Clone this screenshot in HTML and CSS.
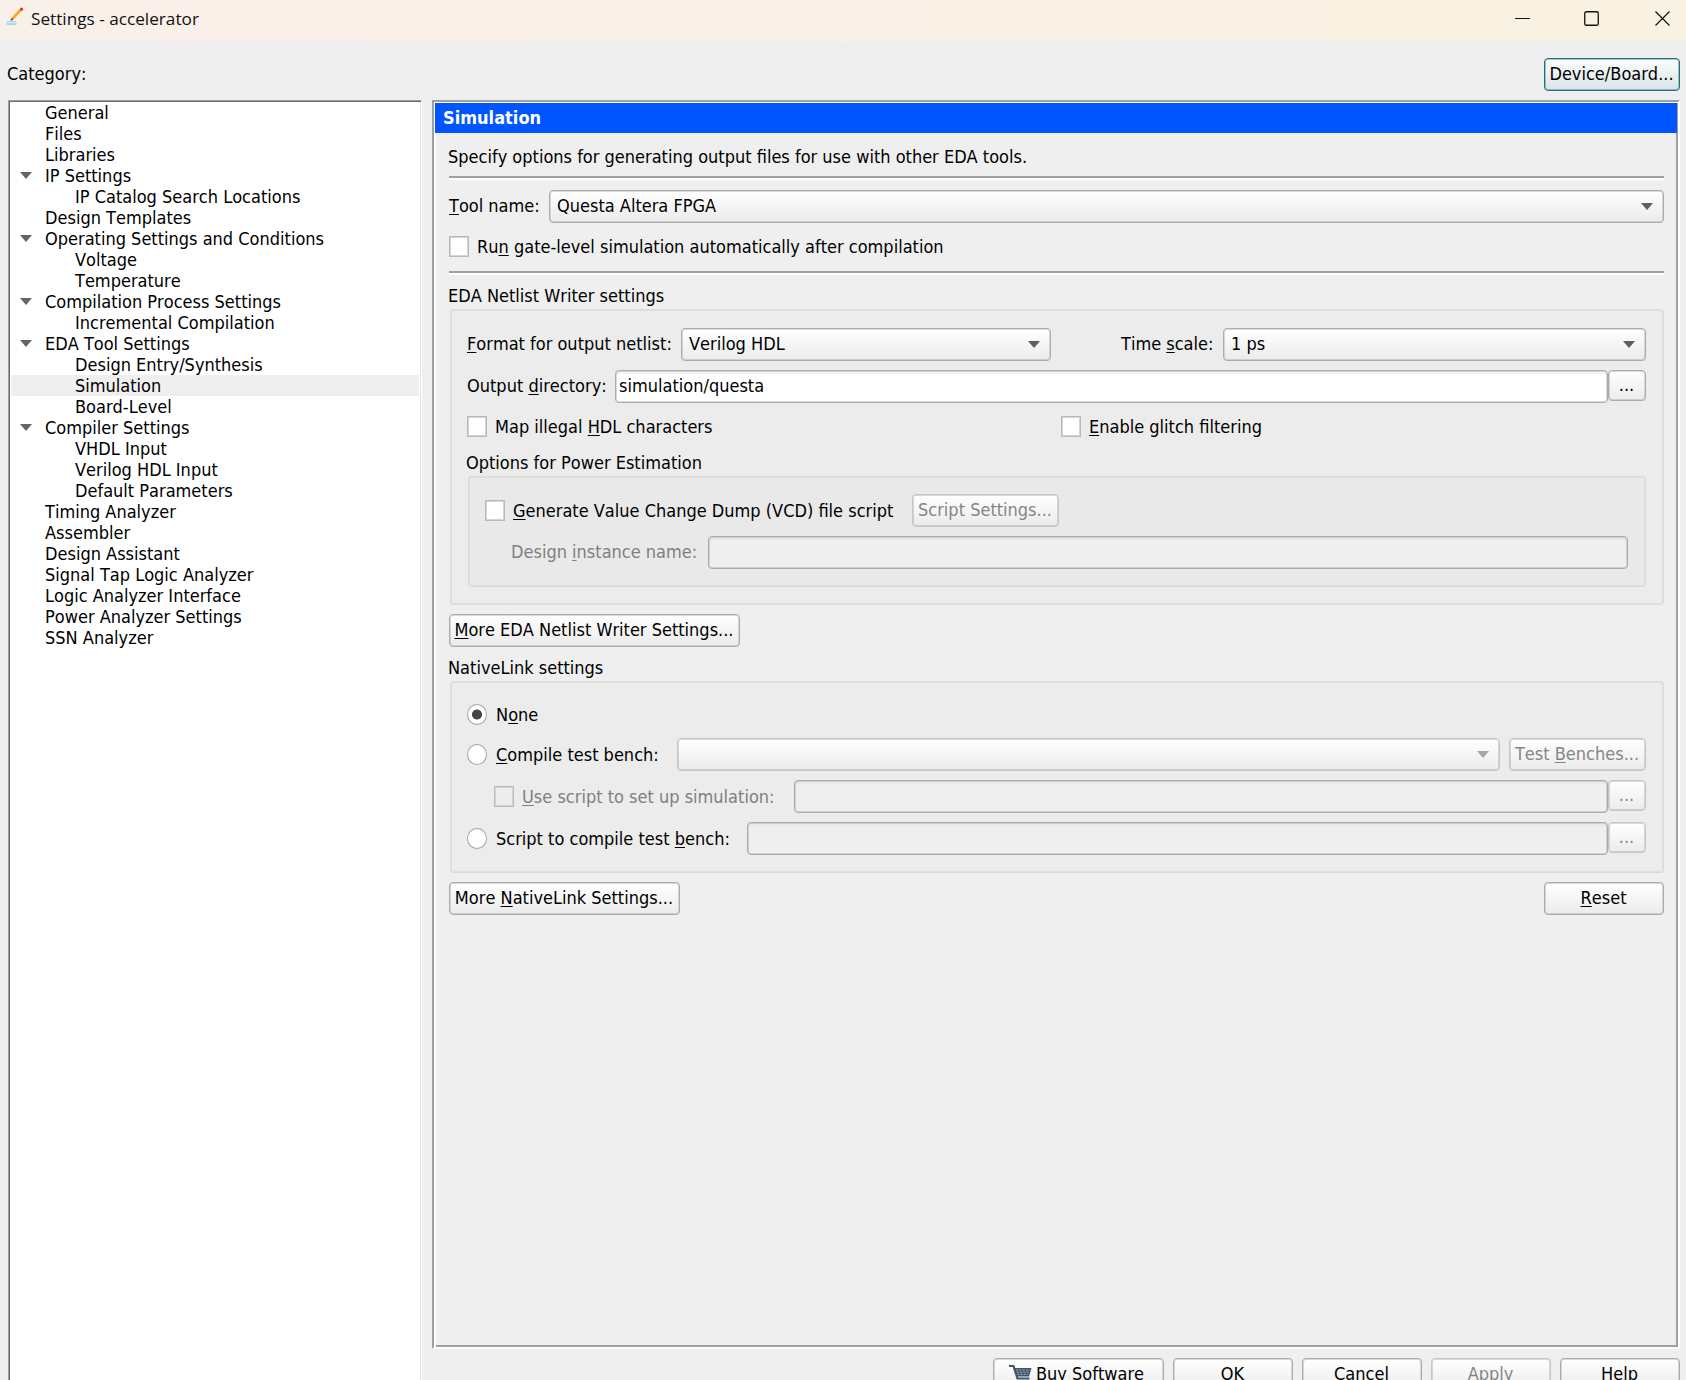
FILE: index.html
```html
<!DOCTYPE html>
<html lang="en">
<head>
<meta charset="utf-8">
<title>Settings - accelerator</title>
<link rel="stylesheet" href="styles.css">
</head>
<body>
<header class="titlebar">
  <svg class="app-icon" width="18" height="20" viewBox="0 0 18 20"><rect x="0.5" y="14" width="10" height="4" fill="#a3d9ea"/><path d="M0.5 15.6h10" stroke="#d8eff5"/><path d="M6.2 12L14.6 3" stroke="#f7a823" stroke-width="2.6"/><path d="M4.8 13.4L6.8 11.4" stroke="#6b5a48" stroke-width="1.8"/><circle cx="15.5" cy="2.2" r="1.6" fill="#e0322c"/></svg>
  <span class="title">Settings - accelerator</span>
  <div class="window-buttons">
    <svg width="16" height="16" viewBox="0 0 16 16"><path d="M0 7.5h15" stroke="#111"/></svg>
    <svg width="16" height="16" viewBox="0 0 16 16"><rect x=".75" y=".75" width="13.5" height="13.5" rx="1.5" fill="none" stroke="#111" stroke-width="1.3"/></svg>
    <svg class="close" width="16" height="16" viewBox="0 0 16 16"><path d="M.5 .5l14 14M14.5 .5l-14 14" stroke="#111" stroke-width="1.2"/></svg>
  </div>
</header>
<div class="top-row">
  <span>Category:</span>
  <button class="btn focus device">Device/Board...</button>
</div>
<main class="body">
  <nav class="tree">
    <div class="item">General</div>
    <div class="item">Files</div>
    <div class="item">Libraries</div>
    <div class="item open">IP Settings</div>
    <div class="item child">IP Catalog Search Locations</div>
    <div class="item">Design Templates</div>
    <div class="item open">Operating Settings and Conditions</div>
    <div class="item child">Voltage</div>
    <div class="item child">Temperature</div>
    <div class="item open">Compilation Process Settings</div>
    <div class="item child">Incremental Compilation</div>
    <div class="item open">EDA Tool Settings</div>
    <div class="item child">Design Entry/Synthesis</div>
    <div class="item child selected">Simulation</div>
    <div class="item child">Board-Level</div>
    <div class="item open">Compiler Settings</div>
    <div class="item child">VHDL Input</div>
    <div class="item child">Verilog HDL Input</div>
    <div class="item child">Default Parameters</div>
    <div class="item">Timing Analyzer</div>
    <div class="item">Assembler</div>
    <div class="item">Design Assistant</div>
    <div class="item">Signal Tap Logic Analyzer</div>
    <div class="item">Logic Analyzer Interface</div>
    <div class="item">Power Analyzer Settings</div>
    <div class="item">SSN Analyzer</div>
  </nav>
  <div class="right">
    <section class="panel">
      <h1 class="panel-title">Simulation</h1>
      <div class="content">
        <p class="line intro">Specify options for generating output files for use with other EDA tools.</p>
        <hr class="sep">
        <div class="row tool-row"><label class="tool-label"><u>T</u>ool name:</label><div class="combo grow">Questa Altera FPGA</div></div>
        <div class="row check-row run-row"><i class="check"></i><span class="check-label">Ru<u>n</u> gate-level simulation automatically after compilation</span></div>
        <hr class="sep">
        <h2 class="line netlist-heading">EDA Netlist Writer settings</h2>
        <div class="group netlist-group">
          <div class="row"><label class="format-label"><u>F</u>ormat for output netlist:</label><div class="combo format-combo">Verilog HDL</div><label class="time-label">Time <u>s</u>cale:</label><div class="combo grow">1 ps</div></div>
          <div class="row next"><label class="output-label">Output <u>d</u>irectory:</label><div class="input grow">simulation/questa</div><button class="btn browse">...</button></div>
          <div class="row check-row map-row"><i class="check"></i><span class="check-label map-label">Map illegal <u>H</u>DL characters</span><i class="check"></i><span class="check-label"><u>E</u>nable glitch filtering</span></div>
          <h3 class="line power-heading">Options for Power Estimation</h3>
          <div class="group power-group">
            <div class="row"><i class="check"></i><span class="check-label vcd-label"><u>G</u>enerate Value Change Dump (VCD) file script</span><button class="btn disabled script-btn">Script Settings...</button></div>
            <div class="row next instance-row"><label class="instance-label muted">Design <u>i</u>nstance name:</label><div class="input off grow"></div></div>
          </div>
        </div>
        <button class="btn more-eda"><span><u>M</u>ore EDA Netlist Writer Settings...</span></button>
        <h2 class="line native-heading">NativeLink settings</h2>
        <div class="group native-group">
          <div class="row check-row"><i class="radio on"></i><span class="radio-label">N<u>o</u>ne</span></div>
          <div class="row compile-row"><i class="radio"></i><span class="radio-label compile-label"><u>C</u>ompile test bench:</span><div class="combo off grow"></div><button class="btn disabled bench-btn"><span>Test <u>B</u>enches...</span></button></div>
          <div class="row next use-row"><i class="check off"></i><span class="check-label use-label muted"><u>U</u>se script to set up simulation:</span><div class="input off grow"></div><button class="btn disabled browse">...</button></div>
          <div class="row next"><i class="radio"></i><span class="radio-label script-label">Script to compile test <u>b</u>ench:</span><div class="input off grow"></div><button class="btn disabled browse">...</button></div>
        </div>
        <div class="row last-row"><button class="btn more-native"><span>More <u>N</u>ativeLink Settings...</span></button><button class="btn std"><span><u>R</u>eset</span></button></div>
      </div>
    </section>
    <footer class="actions">
      <button class="btn buy"><svg width="23" height="20" viewBox="0 0 23 20"><path d="M0 2h4.5l4 12.5h12" fill="none" stroke="#40566b" stroke-width="2.2"/><path d="M4.5 4H22.5L20 12.5H8z" fill="#40566b"/><path d="M7 6H20.5M8 8.2H19.5M8.5 10.4H19" stroke="#a9b7c4" stroke-width=".9" stroke-dasharray="2 1.2"/><circle cx="10" cy="17.8" r="2" fill="#40566b"/><circle cx="18.5" cy="17.8" r="2" fill="#40566b"/></svg>Buy Software</button>
      <button class="btn std">OK</button>
      <button class="btn std">Cancel</button>
      <button class="btn std disabled">Apply</button>
      <button class="btn std">Help</button>
    </footer>
  </div>
</main>
</body>
</html>
```
FILE: styles.css
```css
* { box-sizing: border-box; }

body {
  margin: 0;
  width: 1686px;
  height: 1380px;
  overflow: hidden;
  display: flex;
  flex-direction: column;
  background: #efefef;
  color: #000;
  font: 18px/21px "DejaVu Sans Condensed", "DejaVu Sans", sans-serif;
  font-stretch: condensed;
  font-kerning: none;
  white-space: nowrap;
}

h1, h2, h3, p { margin: 0; font-size: inherit; font-weight: normal; }
u { text-decoration-thickness: 1px; text-underline-offset: 2px; text-decoration-skip-ink: none; }

.titlebar {
  flex: none;
  height: 41px;
  display: flex;
  align-items: center;
  padding: 0 15px 4px 6px;
  background: linear-gradient(90deg, #faf0ea, #faf1e8 50%, #f9f2e2 85%);
}
.app-icon { margin-right: 7px; margin-top: -3px; }
.title { font: 17.2px/22px "Open Sans", "Noto Sans", sans-serif; font-stretch: normal; color: #111; }
.window-buttons { margin-left: auto; display: flex; gap: 53px; }
.close { margin-left: 2px; }

.top-row {
  flex: none;
  height: 59px;
  padding: 17px 6px 9px 7px;
  display: flex;
  justify-content: space-between;
  align-items: flex-start;
}
.top-row span { margin-top: 5px; }

.body { flex: 1; min-height: 0; display: flex; padding-left: 8px; gap: 10px; }

.tree {
  width: 414px;
  background: #fff;
  border-left: 1px solid #a0a0a0;
  border-top: 1px solid #a0a0a0;
  border-right: 1px solid #fff;
  box-shadow: inset 1px 1px #696969, inset -1px 0 #e3e3e3;
  padding: 1px 2px 0;
}
.item { height: 21px; padding-left: 34px; position: relative; }
.child { padding-left: 64px; }
.selected { background: #efefef; }
.open::before {
  content: "";
  position: absolute;
  left: 9px;
  top: 7px;
  width: 12px;
  height: 7px;
  background: #646464;
  clip-path: polygon(0 0, 100% 0, 50% 100%);
}

.right { width: 1248px; display: flex; flex-direction: column; }

.panel {
  flex: none;
  height: 1249px;
  border: 2px solid #a0a0a0;
  border-right-color: #fff;
  border-bottom-color: #fff;
  box-shadow: inset 2px 1px #fff, inset -2px -2px #a0a0a0;
  padding: 1px 1px 2px;
}
.panel-title {
  height: 30px;
  padding: 4px 8px 0;
  background: #0055ff;
  color: #fff;
  font-weight: bold;
}
.content { padding: 13px 13px 0 14px; display: flex; flex-direction: column; align-items: stretch; }
.line { height: 21px; margin-left: -1px; }
.sep { width: 100%; height: 4px; margin: 0; border: 0; border-top: 2px solid #a0a0a0; background: #fff; }
.intro { margin-bottom: 9px; }

.row { display: flex; align-items: center; height: 33px; }
.row label, .check-label, .radio-label { flex: none; }
.row label { padding-bottom: 2px; }
.next { margin-top: 9px; }
.check-row { height: 21px; }
.grow { flex: 1; }
.muted { color: #808080; }

.tool-row { margin-top: 10px; }
.tool-label { width: 100px; }
.run-row { margin: 13px 0 14px; }
.netlist-heading { margin-top: 10px; margin-bottom: 3px; }

.combo, .input, .btn {
  height: 33px;
  border: 1px solid #acacac;
  border-radius: 4px;
  font: inherit;
  font-kerning: none;
  color: inherit;
}
.combo {
  position: relative;
  padding: 4px 7px;
  background: linear-gradient(#fff, #ebebeb);
  box-shadow: inset 0 0 0 1px rgba(172, 172, 172, .45);
}
.combo::after {
  content: "";
  position: absolute;
  right: 10px;
  top: 12px;
  width: 12px;
  height: 7px;
  background: #5f5f5f;
  clip-path: polygon(0 0, 100% 0, 50% 100%);
}
.combo.off { border-color: #c6c6c6; }
.combo.off::after { background: #a6a6a6; }
.input { padding: 4px 3px; background: #fff; box-shadow: inset 0 0 0 1px rgba(172, 172, 172, .45), inset 0 3px #f4f4f4; }
.input.off { background: #efefef; box-shadow: inset 0 0 0 1px rgba(172, 172, 172, .45), inset 0 3px #e9e9e9; }

.btn {
  flex: none;
  display: flex;
  justify-content: center;
  align-items: center;
  padding: 0 1px 2px 0;
  background: linear-gradient(#fff, #ebebeb);
  box-shadow: inset 0 0 0 1px rgba(172, 172, 172, .45);
}
.btn.disabled { color: #868686; border-color: #c6c6c6; }
.btn.focus { border-color: #286f7a; box-shadow: inset 0 0 0 1px rgba(60, 130, 140, .45); background: linear-gradient(#fdfefe, #d9e3e6); }
.device { width: 136px; }
.std { width: 120px; }
.browse { width: 38px; height: 31px; margin-bottom: 2px; }

.check { flex: none; width: 20px; height: 21px; border: 1px solid #b9b9b9; background: #fff; box-shadow: inset 0 0 0 1px #d4d4d4; }
.check.off { background: #ededed; }
.check-label { margin-left: 8px; }
.radio { flex: none; width: 20px; height: 21px; border-radius: 50%; border: 1.5px solid #a4a4a4; background: #fff; }
.radio.on { background: radial-gradient(circle, #454545 4.6px, #fff 5.4px); }
.radio-label { margin-left: 9px; padding-bottom: 1px; }

.group { border: 1px solid #dadada; border-radius: 3px; background: rgba(0, 0, 0, .012); box-shadow: inset 0 0 0 1px #e0e0e0; margin-left: 1px; }
.netlist-group { height: 296px; padding: 18px 17px 0 16px; }
.format-label { width: 214px; }
.format-combo { width: 370px; margin-right: 70px; }
.time-label { width: 102px; }
.output-label { width: 148px; }
.map-row { margin-top: 13px; }
.map-label { width: 566px; }
.power-heading { margin-top: 15px; margin-bottom: 3px; }
.power-group { height: 111px; padding: 17px 17px 0 16px; }
.vcd-label { width: 399px; }
.script-btn { width: 147px; }
.instance-row { padding-left: 26px; }
.instance-label { width: 197px; }

.more-eda { width: 291px; margin-top: 9px; }
.native-heading { margin-top: 10px; margin-bottom: 3px; }
.native-group { height: 192px; padding: 22px 17px 0 16px; }
.compile-row { margin-top: 13px; }
.compile-label { width: 181px; }
.bench-btn { width: 137px; margin-left: 9px; }
.use-row { padding-left: 27px; }
.use-label { width: 272px; }
.script-label { width: 251px; }
.last-row { margin-top: 9px; justify-content: space-between; }
.more-native { width: 231px; }

.actions { display: flex; justify-content: flex-end; gap: 9px; margin-top: 9px; }
.buy { width: 171px; gap: 4px; padding-right: 4px; }
```
